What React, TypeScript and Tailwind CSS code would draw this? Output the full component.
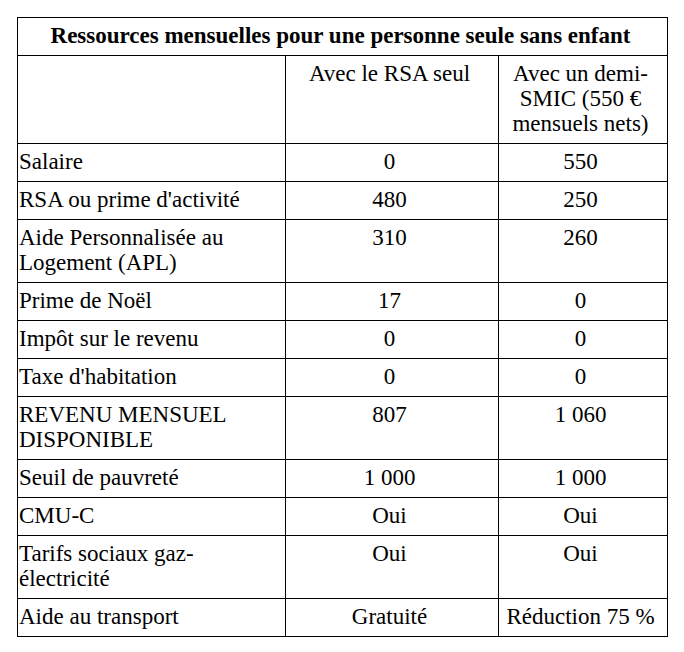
const rows: { label: React.ReactNode; a: string; b: string }[] = [
  { label: "Salaire", a: "0", b: "550" },
  { label: "RSA ou prime d'activité", a: "480", b: "250" },
  {
    label: (
      <>
        Aide Personnalisée au
        <br />
        Logement (APL)
      </>
    ),
    a: "310",
    b: "260",
  },
  { label: "Prime de Noël", a: "17", b: "0" },
  { label: "Impôt sur le revenu", a: "0", b: "0" },
  { label: "Taxe d'habitation", a: "0", b: "0" },
  {
    label: (
      <>
        REVENU MENSUEL
        <br />
        DISPONIBLE
      </>
    ),
    a: "807",
    b: "1 060",
  },
  { label: "Seuil de pauvreté", a: "1 000", b: "1 000" },
  { label: "CMU-C", a: "Oui", b: "Oui" },
  {
    label: (
      <>
        Tarifs sociaux gaz-
        <br />
        électricité
      </>
    ),
    a: "Oui",
    b: "Oui",
  },
  { label: "Aide au transport", a: "Gratuité", b: "Réduction 75 %" },
];

const cell = "border border-black align-top pt-[5px] pb-[7px]";

export default function App() {
  return (
    <div className="w-[684px] h-[652px] bg-white pt-[17px] pl-[17px] text-black [font-family:'Liberation_Serif',serif] text-[23px] leading-[25px]">
      <table className="table-fixed border-collapse w-[650px]">
        <colgroup>
          <col className="w-[268px]" />
          <col className="w-[213px]" />
          <col className="w-[169px]" />
        </colgroup>
        <tbody>
          <tr>
            <td colSpan={3} className={`${cell} text-center font-bold pr-[4px]`}>
              Ressources mensuelles pour une personne seule sans enfant
            </td>
          </tr>
          <tr>
            <td className={`${cell} pl-[1px]`}></td>
            <td className={`${cell} text-center pr-[5px]`}>Avec le RSA seul</td>
            <td className={`${cell} text-center pr-[5px]`}>
              Avec un demi-
              <br />
              SMIC (550 €
              <br />
              mensuels nets)
            </td>
          </tr>
          {rows.map((r, i) => (
            <tr key={i}>
              <td className={`${cell} pl-[1px]`}>{r.label}</td>
              <td className={`${cell} text-center pr-[5px]`}>{r.a}</td>
              <td className={`${cell} text-center pr-[5px]`}>{r.b}</td>
            </tr>
          ))}
        </tbody>
      </table>
    </div>
  );
}
